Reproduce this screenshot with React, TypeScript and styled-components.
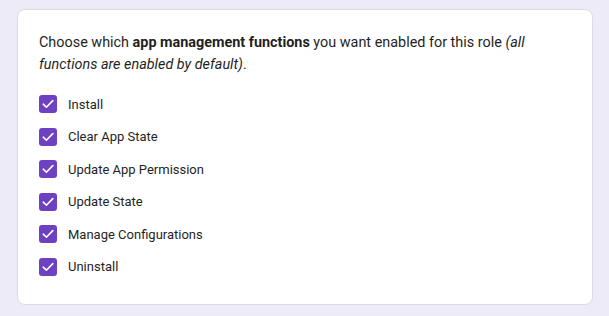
import styled, { createGlobalStyle } from 'styled-components';

const GlobalStyle = createGlobalStyle`
  body {
    margin: 0;
    background: #eeebf8;
    font-family: Roboto, "Liberation Sans", Arial, sans-serif;
  }
`;

const Page = styled.div`
  padding: 9px 16px 11px 17px;
`;

const Card = styled.div`
  background: #fff;
  border: 1px solid #dcdae2;
  border-radius: 8px;
  padding: 22px 21px 20px 21px;
  height: 296px;
  box-sizing: border-box;
`;

const Intro = styled.p`
  margin: 0 0 19px;
  font-size: 14.4px;
  line-height: 22px;
  color: #1f1f24;
  b {
    font-weight: 700;
  }
`;

const List = styled.div`
  display: flex;
  flex-direction: column;
  gap: 14.6px;
`;

const Row = styled.label`
  display: flex;
  align-items: center;
  gap: 11px;
  font-size: 13px;
  color: #1f1f24;
  height: 18px;
`;

const Box = styled.span<{ checked: boolean }>`
  width: 18px;
  height: 18px;
  border-radius: 3px;
  background: ${(p) => (p.checked ? '#6d41c2' : '#fff')};
  display: flex;
  align-items: center;
  justify-content: center;
  flex-shrink: 0;
`;

const items = [
  'Install',
  'Clear App State',
  'Update App Permission',
  'Update State',
  'Manage Configurations',
  'Uninstall',
];

export default function App() {
  return (
    <>
      <GlobalStyle />
      <Page>
        <Card>
          <Intro>
            Choose which <b>app management functions</b> you want enabled for this role{' '}
            <i>(all functions are enabled by default)</i>.
          </Intro>
          <List>
            {items.map((label) => (
              <Row key={label}>
                <Box checked>
                  <svg width="12" height="10" viewBox="0 0 12 10">
                    <path d="M1.2 5.2 L4.4 8.2 L10.8 1.6" fill="none" stroke="#fff" strokeWidth="1.6" strokeLinecap="round" strokeLinejoin="round" />
                  </svg>
                </Box>
                {label}
              </Row>
            ))}
          </List>
        </Card>
      </Page>
    </>
  );
}
